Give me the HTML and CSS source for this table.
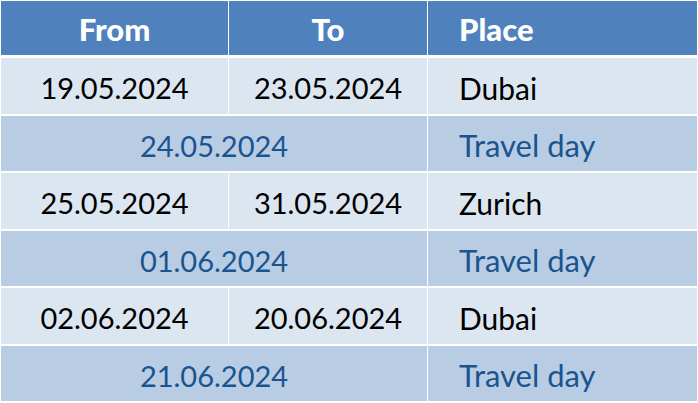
FILE: index.html
```html
<!DOCTYPE html>
<html>
<head>
<meta charset="utf-8">
<link rel="stylesheet" href="styles.css">
</head>
<body>
<div class="table">
  <div class="row head">
    <div class="cell c">From</div>
    <div class="cell c">To</div>
    <div class="cell p">Place</div>
  </div>
  <div class="row light">
    <div class="cell c">19.05.2024</div>
    <div class="cell c">23.05.2024</div>
    <div class="cell p">Dubai</div>
  </div>
  <div class="row mid">
    <div class="cell c span">24.05.2024</div>
    <div class="cell p">Travel day</div>
  </div>
  <div class="row light">
    <div class="cell c">25.05.2024</div>
    <div class="cell c">31.05.2024</div>
    <div class="cell p">Zurich</div>
  </div>
  <div class="row mid">
    <div class="cell c span">01.06.2024</div>
    <div class="cell p">Travel day</div>
  </div>
  <div class="row light">
    <div class="cell c">02.06.2024</div>
    <div class="cell c">20.06.2024</div>
    <div class="cell p">Dubai</div>
  </div>
  <div class="row mid">
    <div class="cell c span">21.06.2024</div>
    <div class="cell p">Travel day</div>
  </div>
  <div class="row light stub">
    <div class="cell c"></div>
    <div class="cell c"></div>
    <div class="cell p"></div>
  </div>
</div>
</body>
</html>
```
FILE: styles.css
```css
html, body {
  margin: 0;
  padding: 0;
  background: #ffffff;
  overflow: hidden;
}
body {
  font-family: "Lato", "Open Sans", sans-serif;
}
.table {
  margin: 1px 0 0 1px;
  width: 696px;
  display: flex;
  flex-direction: column;
  gap: 2px;
}
.row {
  display: grid;
  grid-template-columns: 227px 198px 269px;
  column-gap: 1px;
  height: 55.5px;
}
.row.head {
  height: 54px;
  margin-bottom: 1px;
}
.row.stub {
  height: 1px;
}
.cell {
  display: flex;
  align-items: center;
  padding-top: 4px;
  box-sizing: border-box;
  font-size: 29px;
  color: #000000;
  white-space: nowrap;
}
.cell.c {
  justify-content: center;
}
.cell.p {
  padding-left: 31px;
  font-size: 30px;
}
.cell.span {
  grid-column: 1 / span 2;
}
.head .cell {
  background: #4f81bd;
  color: #ffffff;
  font-weight: 900;
  font-size: 31px;
  padding-top: 2px;
}
.head .cell.p {
  font-size: 31px;
}
.light .cell {
  background: #dce6f1;
}
.mid .cell {
  background: #b8cce4;
  color: #1a5490;
}
.mid .cell.p {
  font-size: 31px;
}
```
